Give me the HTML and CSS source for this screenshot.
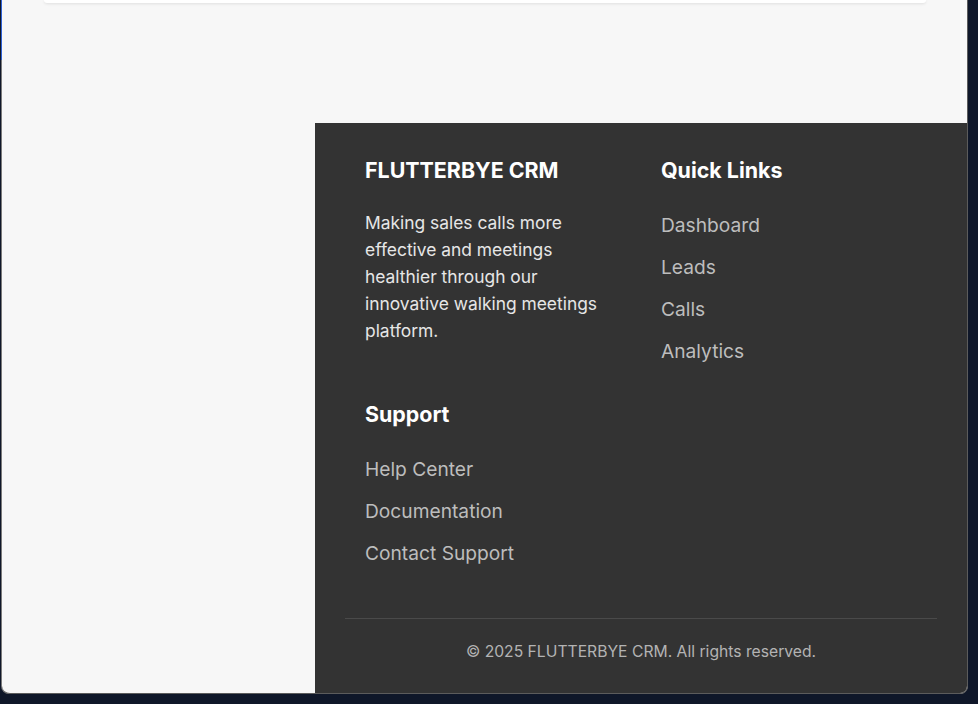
FILE: index.html
```html
<!DOCTYPE html>
<html lang="en">
<head>
<meta charset="utf-8">
<title>FLUTTERBYE CRM</title>
<link rel="stylesheet" href="styles.css">
</head>
<body>
<div class="frame">
  <div class="window">
    <div class="card-tail"></div>
    <footer class="footer">
      <div class="footer-grid">
        <div class="footer-col">
          <h3 class="footer-title">FLUTTERBYE CRM</h3>
          <p class="footer-text">Making sales calls more effective and meetings healthier through our innovative walking meetings platform.</p>
        </div>
        <div class="footer-col">
          <h3 class="footer-title">Quick Links</h3>
          <ul class="footer-links">
            <li><a href="#">Dashboard</a></li>
            <li><a href="#">Leads</a></li>
            <li><a href="#">Calls</a></li>
            <li><a href="#">Analytics</a></li>
          </ul>
        </div>
        <div class="footer-col">
          <h3 class="footer-title">Support</h3>
          <ul class="footer-links">
            <li><a href="#">Help Center</a></li>
            <li><a href="#">Documentation</a></li>
            <li><a href="#">Contact Support</a></li>
          </ul>
        </div>
      </div>
      <div class="footer-bottom">© 2025 FLUTTERBYE CRM. All rights reserved.</div>
    </footer>
  </div>
</div>
</body>
</html>
```

FILE: styles.css
```css
* { box-sizing: border-box; }
html, body {
  margin: 0;
  padding: 0;
  background: #0f1729;
  width: 978px;
  height: 704px;
  overflow: hidden;
  font-family: Inter, "Noto Sans", sans-serif;
}
.frame {
  margin-left: 1px;
  width: 967px;
  height: 694px;
  padding-left: 1px;
  background: linear-gradient(to bottom, #2f62d6 0, #2f62d6 60px, #7a7a7a 60px, #7a7a7a 100%);
  border-radius: 0 0 8px 8px;
}
.window {
  width: 966px;
  height: 694px;
  background: #f7f7f7;
  border-right: 1px solid #5c5c5c;
  border-bottom: 1px solid #5c5c5c;
  border-radius: 0 0 8px 8px;
  overflow: hidden;
  display: flex;
  flex-direction: column;
}
.card-tail {
  height: 3px;
  margin: 0 41px 0 42px;
  background: #ffffff;
  border-radius: 0 0 10px 10px;
  box-shadow: 0 1px 3px rgba(0, 0, 0, 0.10);
  flex: none;
}
.footer {
  margin-top: 120px;
  margin-left: 313px;
  flex: 1;
  background: #333333;
  padding: 35px 30px 0 30px;
  display: flex;
  flex-direction: column;
}
.footer-grid {
  display: grid;
  grid-template-columns: 1fr 1fr;
  row-gap: 30px;
}
.footer-col {
  padding: 0 20px;
}
.footer-title {
  margin: 0 0 21px 0;
  font-size: 21.4px;
  line-height: 24px;
  font-weight: 700;
  color: #ffffff;
}
.footer-text {
  margin: 0;
  padding-top: 6px;
  font-size: 17.4px;
  line-height: 27px;
  color: #e6e6e6;
}
.footer-links {
  list-style: none;
  margin: 0;
  padding: 1px 0 0 0;
}
.footer-links li {
  padding: 9px 0;
  line-height: 24px;
  font-size: 19.2px;
}
.footer-links a {
  color: #bdbdbd;
  text-decoration: none;
}
.footer-bottom {
  margin-top: 44px;
  border-top: 1px solid #4a4a4a;
  padding-top: 23px;
  text-align: center;
  font-size: 15.7px;
  line-height: 20px;
  color: #b3b3b3;
}
```
